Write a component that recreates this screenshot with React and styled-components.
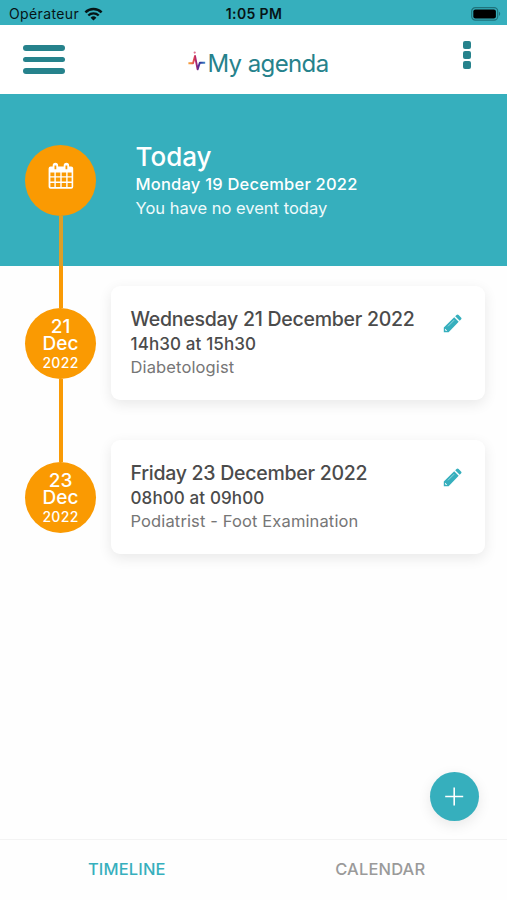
import React from "react";
import styled, { createGlobalStyle } from "styled-components";

const events = [
  {
    day: "21",
    month: "Dec",
    year: "2022",
    date: "Wednesday 21 December 2022",
    time: "14h30 at 15h30",
    title: "Diabetologist",
  },
  {
    day: "23",
    month: "Dec",
    year: "2022",
    date: "Friday 23 December 2022",
    time: "08h00 at 09h00",
    title: "Podiatrist - Foot Examination",
  },
];

const StatusBar = () => (
  <Status>
    <Carrier>
      <span>Opérateur</span>
      <svg width="19" height="14" viewBox="0 0 19 14" fill="none">
        <path d="M1.4 5.4a11.6 11.6 0 0 1 16.2 0" stroke="#061416" strokeWidth="2.5" />
        <path d="M4.3 8.5a7.4 7.4 0 0 1 10.4 0" stroke="#061416" strokeWidth="2.3" />
        <path d="M9.5 13.6 6.6 10.7a4.1 4.1 0 0 1 5.8 0z" fill="#061416" />
      </svg>
    </Carrier>
    <Clock>1:05 PM</Clock>
    <Battery>
      <svg width="30" height="14" viewBox="0 0 30 14">
        <rect x="0.7" y="0.7" width="26" height="12.4" rx="3.6" fill="none" stroke="#1f737c" strokeWidth="1.2" />
        <rect x="2.3" y="2.4" width="22.6" height="9" rx="2" fill="#000" />
        <path d="M28 4.8c1.6.7 1.6 3.5 0 4.2z" fill="#1f737c" />
      </svg>
    </Battery>
  </Status>
);

const Header = () => (
  <TopBar>
    <MenuButton aria-label="Menu">
      <span />
      <span />
      <span />
    </MenuButton>
    <Title>
      <svg width="19" height="22" viewBox="0 0 19 22" fill="none">
        <defs>
          <linearGradient id="pulse" x1="0" y1="0" x2="19" y2="0" gradientUnits="userSpaceOnUse">
            <stop offset="0.08" stopColor="#f59a3c" />
            <stop offset="0.3" stopColor="#e0484f" />
            <stop offset="0.42" stopColor="#b3206f" />
            <stop offset="0.54" stopColor="#5c2a92" />
            <stop offset="0.68" stopColor="#2c3fa0" />
            <stop offset="0.95" stopColor="#3f9fd8" />
          </linearGradient>
        </defs>
        <path
          d="M0.4 12.2h4.6L7 5l2.6 13.4 2.2-6.6h5.4"
          stroke="url(#pulse)"
          strokeWidth="1.9"
          strokeLinejoin="round"
        />
        <circle cx="6.7" cy="1.6" r="1.1" fill="#e0708f" />
      </svg>
      <h1>My agenda</h1>
    </Title>
    <MoreButton aria-label="More">
      <span />
      <span />
      <span />
    </MoreButton>
  </TopBar>
);

const CalendarIcon = () => (
  <svg width="26" height="28" viewBox="0 0 26 28">
    <path
      fill="#fff"
      fillRule="evenodd"
      d="M2.6 4.6h2.1V3.4a2.7 2.7 0 0 1 5.4 0v1.2h5.6V3.4a2.7 2.7 0 0 1 5.4 0v1.2h2.1a2 2 0 0 1 2 2v18.2a2 2 0 0 1-2 2H2.6a2 2 0 0 1-2-2V6.6a2 2 0 0 1 2-2zM6.5 3.6v3.6h1.8V3.6zM17.5 3.6v3.6h1.8V3.6zM2.4 10.4v3.8h4v-3.8zm5.4 0v3.8h4.5v-3.8zm5.9 0v3.8h4.5v-3.8zm5.9 0v3.8h4v-3.8zM2.4 15.6v3.9h4v-3.9zm5.4 0v3.9h4.5v-3.9zm5.9 0v3.9h4.5v-3.9zm5.9 0v3.9h4v-3.9zM2.4 20.9v4.1h4v-4.1zm5.4 0v4.1h4.5v-4.1zm5.9 0v4.1h4.5v-4.1zm5.9 0v4.1h4v-4.1z"
    />
  </svg>
);

const PencilIcon = () => (
  <svg width="19" height="19" viewBox="0 0 19 19">
    <path
      fill="#36afbd"
      d="M.8 13.4 11.2 3.3l4.5 4.5L5.6 18.2H.8zM12.2 2.3l1.3-1.3a1.5 1.5 0 0 1 2.1 0L18 3.4a1.5 1.5 0 0 1 0 2.1l-1.3 1.3z"
    />
    <path d="M5 12.3 11.2 6.1" stroke="#b9e4e9" strokeWidth="0.7" />
    <path d="m2.2 14.8 2 2-1.2.2-1.1-1.1z" fill="#fff" />
  </svg>
);

const App = () => {
  return (
    <>
      <GlobalStyle />
      <Screen>
        <StatusBar />
        <Header />
        <Today>
          <TodayRail>
            <Bubble $raised>
              <CalendarIcon />
            </Bubble>
            <Connector $onTeal />
          </TodayRail>
          <TodayText>
            <h2>Today</h2>
            <strong>Monday 19 December 2022</strong>
            <p>You have no event today</p>
          </TodayText>
        </Today>
        <Timeline>
          {events.map((event, index) => (
            <Row key={event.date}>
              <Rail>
                <Connector />
                <Bubble>
                  <Day>
                    {event.day}
                    <br />
                    {event.month}
                  </Day>
                  <Year>{event.year}</Year>
                </Bubble>
                <Connector $hidden={index === events.length - 1} />
              </Rail>
              <Card>
                <div>
                  <EventDate>{event.date}</EventDate>
                  <EventTime>{event.time}</EventTime>
                  <EventTitle>{event.title}</EventTitle>
                </div>
                <EditButton aria-label="Edit">
                  <PencilIcon />
                </EditButton>
              </Card>
            </Row>
          ))}
        </Timeline>
        <Actions>
          <AddButton aria-label="Add">
            <svg width="19" height="19" viewBox="0 0 19 19">
              <path d="M9.2 0.5v18M0.2 9.5h18" stroke="#fff" strokeWidth="1.6" />
            </svg>
          </AddButton>
        </Actions>
        <Tabs>
          <Tab $active>TIMELINE</Tab>
          <Tab>CALENDAR</Tab>
        </Tabs>
      </Screen>
    </>
  );
};

export default App;

const GlobalStyle = createGlobalStyle`
  * {
    box-sizing: border-box;
    margin: 0;
    padding: 0;
  }
  body {
    background-color: #ffffff;
    font-family: Inter, "Liberation Sans", sans-serif;
  }
  button {
    border: none;
    background: none;
    font-family: inherit;
  }
  svg {
    display: block;
    flex-shrink: 0;
  }
`;

const Screen = styled.div`
  display: flex;
  flex-direction: column;
  width: 507px;
  height: 900px;
  overflow: hidden;
  background-color: #fefefe;
`;

const Status = styled.div`
  display: grid;
  grid-template-columns: 1fr auto 1fr;
  align-items: center;
  height: 25px;
  padding: 2px 6px 0 9px;
  background-color: #36afbd;
  color: #061416;
`;

const Carrier = styled.div`
  display: flex;
  align-items: center;
  gap: 5px;
  font-size: 14px;
  letter-spacing: 0.38px;
`;

const Clock = styled.div`
  margin-left: -2px;
  font-size: 14px;
  font-weight: 600;
  letter-spacing: 0.35px;
`;

const Battery = styled.div`
  display: flex;
  justify-content: flex-end;
`;

const TopBar = styled.header`
  display: flex;
  justify-content: space-between;
  align-items: flex-start;
  height: 69px;
  padding: 15px 36px 0 23px;
  background-color: #ffffff;
`;

const MenuButton = styled.button`
  display: flex;
  flex-direction: column;
  gap: 6px;
  width: 42px;
  padding-top: 5px;

  span {
    height: 5.5px;
    border-radius: 3px;
    background-color: #26828c;
  }
`;

const Title = styled.div`
  display: flex;
  align-items: center;
  padding: 10px 11px 0 0;

  svg {
    margin-top: -4px;
  }
  h1 {
    color: #26828c;
    font-size: 24px;
    font-weight: 400;
    line-height: 28px;
    letter-spacing: -0.6px;
  }
`;

const MoreButton = styled.button`
  display: flex;
  flex-direction: column;
  gap: 2px;
  padding-top: 1px;

  span {
    width: 8px;
    height: 8px;
    border-radius: 2px;
    background-color: #26828c;
  }
`;

const Today = styled.section`
  display: flex;
  height: 172px;
  padding-left: 25px;
  background-color: #36afbd;
`;

const Rail = styled.div`
  display: flex;
  flex-direction: column;
  align-items: center;
  width: 72px;
`;

const TodayRail = styled(Rail)`
  padding-top: 51px;
`;

const Connector = styled.div`
  flex: 1;
  width: 4px;
  background-color: ${({ $onTeal }) => ($onTeal ? "#dc9f28" : "#f99a05")};
  visibility: ${({ $hidden }) => ($hidden ? "hidden" : "visible")};
`;

const Bubble = styled.div`
  display: flex;
  flex-direction: column;
  justify-content: center;
  align-items: center;
  align-self: flex-start;
  width: 71px;
  height: 71px;
  padding-bottom: ${({ $raised }) => ($raised ? "10px" : "0")};
  padding-top: ${({ $raised }) => ($raised ? "0" : "3px")};
  border-radius: 50%;
  background-color: #fa9a02;
  color: #ffffff;
`;

const Day = styled.span`
  font-size: 19px;
  line-height: 17.5px;
  font-weight: 500;
  text-align: center;
`;

const Year = styled.span`
  margin-top: 1.5px;
  font-size: 14px;
  line-height: 17px;
  font-weight: 500;
  letter-spacing: 0.3px;
`;

const TodayText = styled.div`
  padding: 46px 0 0 38.5px;
  color: #ffffff;

  h2 {
    font-size: 26px;
    line-height: 33px;
    font-weight: 500;
  }
  strong {
    display: block;
    font-size: 16.5px;
    line-height: 22px;
    font-weight: 500;
    letter-spacing: 0.22px;
  }
  p {
    font-size: 16.5px;
    line-height: 26px;
    color: #effafb;
  }
`;

const Timeline = styled.main`
  display: flex;
  flex-direction: column;
`;

const Row = styled.div`
  display: flex;
  height: 154px;
  padding: 0 22px 0 25px;
`;

const Card = styled.article`
  display: flex;
  justify-content: space-between;
  flex: 1;
  height: 114px;
  margin: 20px 0 0 14px;
  padding: 20px 23px 0 19.5px;
  border-radius: 9px;
  background-color: #ffffff;
  box-shadow: 0 4px 14px rgba(0, 0, 0, 0.09);
`;

const EventDate = styled.h3`
  color: #4b4b4b;
  font-size: 19.5px;
  line-height: 26px;
  font-weight: 500;
  letter-spacing: -0.26px;
  white-space: nowrap;
`;

const EventTime = styled.p`
  color: #4b4b4b;
  font-size: 17px;
  line-height: 24px;
  font-weight: 500;
  letter-spacing: 0.12px;
`;

const EventTitle = styled.p`
  color: #767676;
  font-size: 16.5px;
  line-height: 23px;
  letter-spacing: 0.13px;
`;

const EditButton = styled.button`
  align-self: flex-start;
  padding-top: 8px;
`;

const Actions = styled.div`
  display: flex;
  justify-content: flex-end;
  align-items: flex-end;
  flex: 1;
  padding: 0 28px 18px 0;
`;

const AddButton = styled.button`
  display: flex;
  justify-content: center;
  align-items: center;
  width: 49px;
  height: 49px;
  border-radius: 50%;
  background-color: #36afbd;
  box-shadow: 0 4px 14px rgba(0, 0, 0, 0.09);
`;

const Tabs = styled.nav`
  display: grid;
  grid-template-columns: 1fr 1fr;
  height: 61px;
  border-top: 1px solid #f3f3f3;
  background-color: #fefefe;
`;

const Tab = styled.button`
  padding-bottom: 2px;
  color: ${({ $active }) => ($active ? "#36afbd" : "#9a9a9a")};
  font-size: 16.5px;
  font-weight: 500;
  letter-spacing: 0.15px;
`;
